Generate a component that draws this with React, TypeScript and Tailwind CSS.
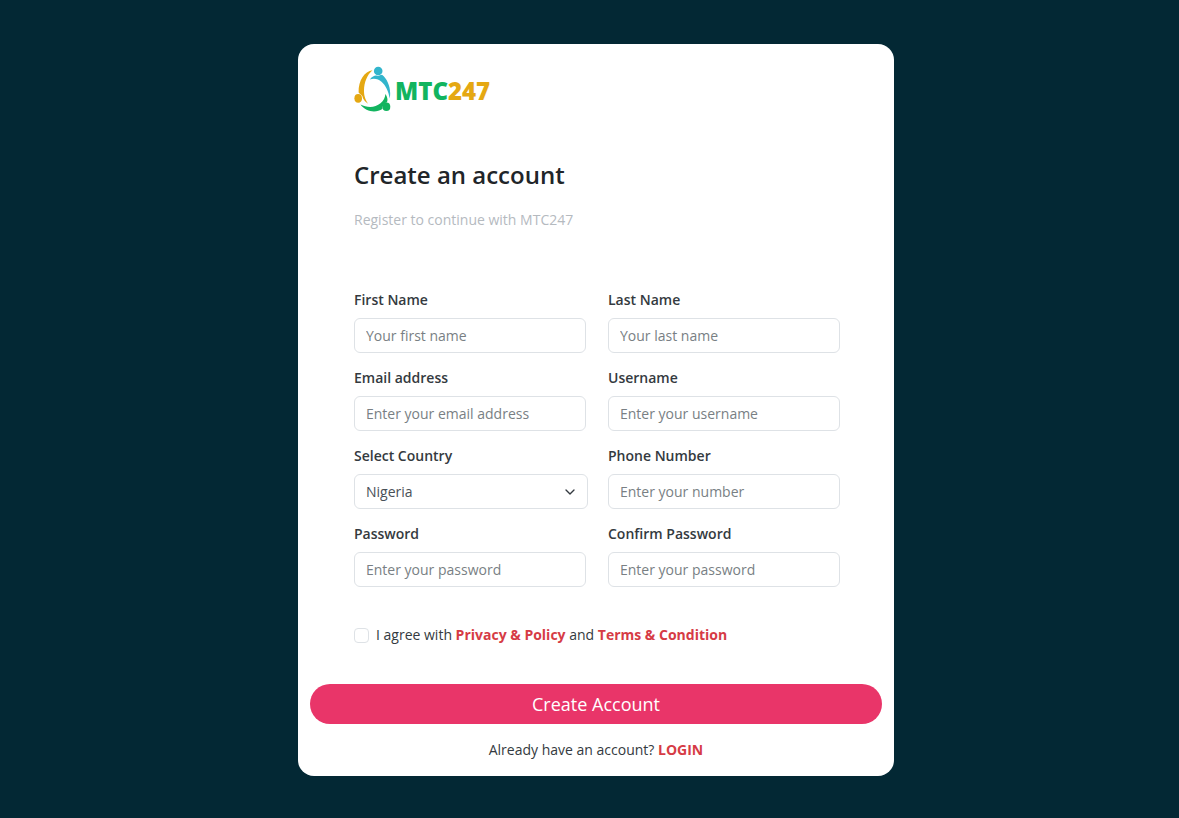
import { ChevronDown } from "lucide-react";

type FieldProps = {
  id: string;
  label: string;
  placeholder: string;
  type?: string;
};

const controlClass =
  "h-[35px] rounded-md border border-[#dee2e6] bg-white px-[11px] text-sm text-[#495057] outline-none placeholder:text-[#797f84] focus:border-[#86b7fe]";

const labelClass = "text-sm leading-5 font-semibold text-[#343a40]";

function Field({ id, label, placeholder, type = "text" }: FieldProps) {
  return (
    <div className="flex min-w-0 flex-col gap-2">
      <label htmlFor={id} className={labelClass}>
        {label}
      </label>
      <input id={id} name={id} type={type} placeholder={placeholder} className={`w-full ${controlClass}`} />
    </div>
  );
}

function CountryField() {
  return (
    <div className="-mr-0.5 flex min-w-0 flex-col gap-2">
      <label htmlFor="country" className={labelClass}>
        Select Country
      </label>
      <div className="relative">
        <select id="country" name="country" className={`w-full appearance-none ${controlClass}`}>
          <option>Nigeria</option>
          <option>Ghana</option>
          <option>Kenya</option>
        </select>
        <ChevronDown
          aria-hidden="true"
          className="pointer-events-none absolute top-2.5 right-2.5 size-4 text-[#343a40]"
        />
      </div>
    </div>
  );
}

function Logo() {
  return (
    <a href="#" aria-label="MTC247" className="flex items-center gap-1 self-start">
      <svg viewBox="0 0 37 46" className="h-[46px] w-[37px]" aria-hidden="true">
        <circle cx="24.2" cy="5" r="4.3" fill="#32b5cc" />
        <path d="M15.8 13.4 C18.5 10.4 20.5 9.3 22.5 9.6 C24.5 10.4 26 9 28 8.8 C34 13.5 37.5 23 35.7 32.5 C34.6 25.5 31.6 19.2 27.5 15.8 C24.5 13 20.5 12.2 15.8 13.4Z" fill="#32b5cc" />
        <ellipse cx="4.2" cy="32.3" rx="3.8" ry="4.4" fill="#e5a812" />
        <path d="M18.5 4.2 C10.5 5.5 4.4 14 4.6 26.5 C5.6 28 7.6 28.5 8.4 30.3 C9 32.5 9.6 34.5 14 37.8 C10.6 32.5 9.9 28.5 10 24 C10.2 16.5 12.8 9 18.5 4.2Z" fill="#e5a812" />
        <ellipse cx="32.4" cy="40.8" rx="3.9" ry="4.3" fill="#12b45f" />
        <path d="M6.5 38.5 C13 41.8 21 42 26.5 37.3 C29.6 34.5 31.2 31.5 31.4 28 C33.6 31 34 34.5 32.8 36.5 C30.5 37 28.6 38.7 28.4 43 C22 47.2 12 46.2 6.5 38.5Z" fill="#12b45f" />
      </svg>
      <span className="pt-1 text-2xl leading-8 font-extrabold text-[#12b45f]">
        MTC<span className="text-[#e5a812]">247</span>
      </span>
    </a>
  );
}

export default function App() {
  return (
    <main className="flex min-h-screen items-center justify-center bg-[#032834] py-11 pr-0 pl-[13px] font-['Open_Sans','Noto_Sans',sans-serif] text-sm text-[#343a40]">
      <form
        onSubmit={(event) => event.preventDefault()}
        className="w-full max-w-[596px] rounded-2xl bg-white px-3 pt-[22px] pb-4"
      >
        <div className="flex flex-col pr-[42px] pl-11">
          <Logo />
          <h1 className="mt-[45px] text-2xl leading-9 font-semibold text-[#212529]">Create an account</h1>
          <p className="mt-[17px] leading-5 text-[#b5babf]">Register to continue with MTC247</p>

          <div className="mt-[60px] grid grid-cols-1 gap-x-[22px] gap-y-[15px] sm:grid-cols-2">
            <Field id="first-name" label="First Name" placeholder="Your first name" />
            <Field id="last-name" label="Last Name" placeholder="Your last name" />
            <Field id="email" label="Email address" placeholder="Enter your email address" type="email" />
            <Field id="username" label="Username" placeholder="Enter your username" />
            <CountryField />
            <Field id="phone" label="Phone Number" placeholder="Enter your number" type="tel" />
            <Field id="password" label="Password" placeholder="Enter your password" type="password" />
            <Field id="confirm-password" label="Confirm Password" placeholder="Enter your password" type="password" />
          </div>

          <div className="mt-[38px] flex items-center gap-[7px] leading-5">
            <input
              id="agree"
              type="checkbox"
              className="size-[15px] shrink-0 appearance-none rounded border border-[#dee2e6] bg-white checked:bg-[#e93569]"
            />
            <label htmlFor="agree">
              I agree with{" "}
              <a href="#" className="font-bold text-[#d63b45]">Privacy &amp; Policy</a> and{" "}
              <a href="#" className="font-bold text-[#d63b45]">Terms &amp; Condition</a>
            </label>
          </div>
        </div>

        <button type="submit" className="mt-[39px] h-10 w-full rounded-full bg-[#e93569] text-lg text-white">
          Create Account
        </button>
        <p className="mt-4 text-center leading-5">
          Already have an account?{" "}
          <a href="#" className="font-bold text-[#d63b45]">LOGIN</a>
        </p>
      </form>
    </main>
  );
}
